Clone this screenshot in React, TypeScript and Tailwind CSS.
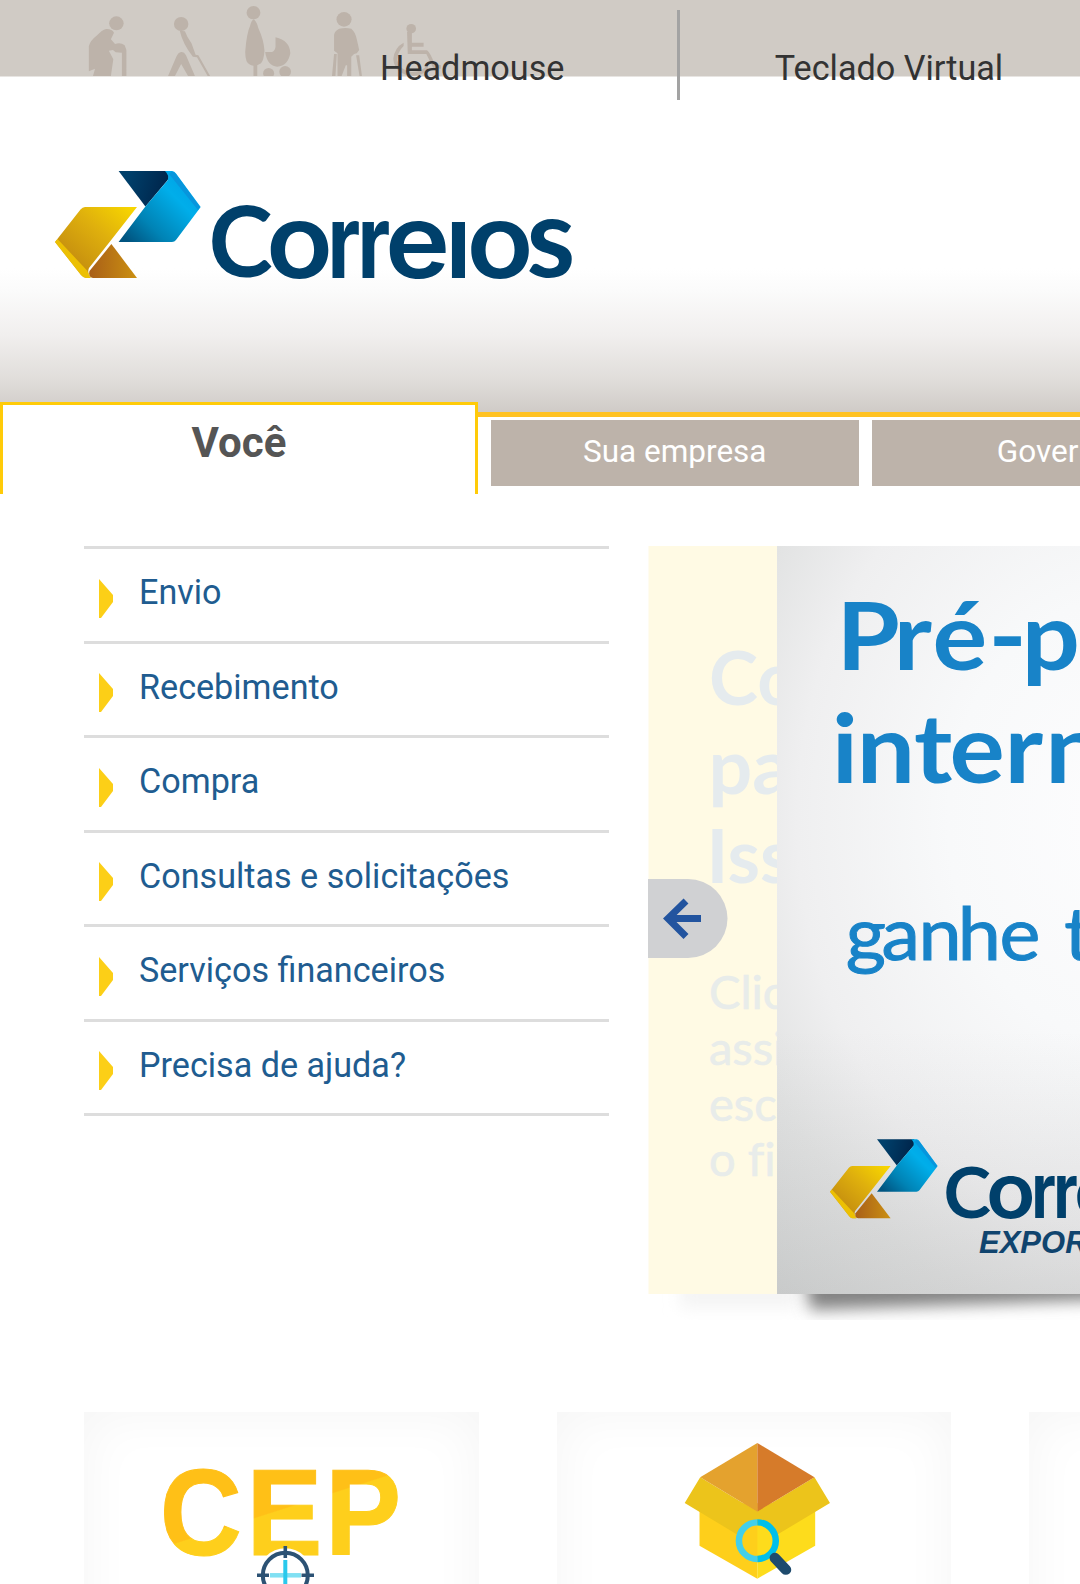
import React from "react";

const menu = [
  "Envio",
  "Recebimento",
  "Compra",
  "Consultas e solicitações",
  "Serviços financeiros",
  "Precisa de ajuda?",
];

function Defs() {
  return (
    <defs>
      <linearGradient id="navy" x1="0" y1="0" x2="1" y2="0.2">
        <stop offset="0.2" stopColor="#00406b" />
        <stop offset="1" stopColor="#00254b" />
      </linearGradient>
      <linearGradient id="sky" gradientUnits="userSpaceOnUse" x1="75" y1="72" x2="128" y2="18">
        <stop offset="0" stopColor="#005480" />
        <stop offset="0.35" stopColor="#0083b5" />
        <stop offset="0.85" stopColor="#00aeea" />
        <stop offset="1" stopColor="#00a8e8" />
      </linearGradient>
      <linearGradient id="gold" gradientUnits="userSpaceOnUse" x1="22" y1="90" x2="72" y2="34">
        <stop offset="0" stopColor="#c8920f" />
        <stop offset="0.5" stopColor="#dfb00d" />
        <stop offset="1" stopColor="#f7d500" />
      </linearGradient>
      <linearGradient id="brown" x1="0" y1="0" x2="1" y2="0">
        <stop offset="0" stopColor="#a95f18" />
        <stop offset="1" stopColor="#cb9011" />
      </linearGradient>
    </defs>
  );
}

/* Folded-arrow emblem followed by the wordmark */
function LogoArt() {
  return (
    <g>
      <path d="M63.6 0H114L113.6 8L90.4 35.6Z" fill="url(#navy)" />
      <path d="M110 0H117Q119.500 0 121 2.500L145.700 36L121 69Q119.500 71 117 71H63.600L90.400 35.600L112.500 9.500Q115 5 110 0Z" fill="url(#sky)" />
      <path d="M117 .5Q119.500 .5 121 3L145 36L143 39L114 3Z" fill="#0a8fd8" opacity=".75" />
      <path d="M30 36H82L55.400 70L34 97Q32 102 35.500 107H31Q28.500 107 26 104L0 71L25.500 38.500Q27.500 36 30 36Z" fill="url(#gold)" />
      <path d="M0 71L26 104Q28.500 107 31 107H36L32 99.500L2.500 68Z" fill="#f5cc00" opacity=".8" />
      <path d="M56.400 73L82 107H38Q33 106 34.500 100Z" fill="url(#brown)" />
      <g aria-label="Correios" fill="#00406b" fontFamily="Inter, sans-serif" fontWeight="600" fontSize="103">
        <text x="153.500" y="106" fontFamily="Lato, sans-serif" fontWeight="700" fontSize="97">C</text>
        <text transform="translate(211 106.5) scale(1.07 1)">o</text>
        <text transform="translate(272.5 106.500) scale(.78 1)" fontWeight="700">r</text>
        <text transform="translate(302.5 106.500) scale(.78 1)" fontWeight="700">r</text>
        <text transform="translate(330 106.5) scale(1.07 1)">e</text>
        <text transform="translate(390 106.5)">ı</text>
        <text transform="translate(411.5 106.5) scale(1.07 1)">o</text>
        <text x="471.500" y="106" fontFamily="Lato, sans-serif" fontWeight="700" fontSize="111">s</text>
      </g>
    </g>
  );
}

function Figures() {
  return (
    <svg
      className="absolute top-0 left-0 h-[76px] w-[540px]"
      viewBox="0 0 1568 228"
      preserveAspectRatio="none"
      fill="#bdb3aa"
      stroke="none"
    >
      <circle cx="338" cy="70" r="21" />
      <path d="M308 87Q325 86 331 98L322 118L334 132Q350 126 362 136L367 150V228H354V158L336 157L328 150L316 152L329 178L322 228H270L276 206L258 214V138Q262 122 282 106Q296 90 308 87Z" />
      <circle cx="526" cy="72" r="21" />
      <path d="M522 92L537 94Q543 112 556 130L568 164L576 166L610 228H603L572 172L560 170Q530 130 522 92Z" />
      <path d="M526 156Q534 154 540 166L566 228H546L526 192L508 228H488L512 170Q518 157 526 156Z" />
      <circle cx="736" cy="38" r="20" />
      <path d="M736 58Q746 64 750 84Q766 120 768 152Q766 180 758 190L747 196V228H736V197Q722 196 716 184Q712 172 712 156Q716 100 726 78Q730 62 736 58Z" />
      <path d="M800 112Q842 122 843 160Q836 198 805 200Q776 198 770 156H790Q799 152 800 140Z" />
      <circle cx="780" cy="220" r="16" />
      <circle cx="828" cy="215" r="17" />
      <circle cx="999" cy="58" r="22" />
      <path d="M985 86Q1004 82 1020 86Q1032 96 1036 118L1043 150L1036 160L1028 162L1020 170V228H1008V196H1004L992 228H980V160L970 152V104Q972 92 985 86Z" />
      <path d="M970 162L978 162L974 228H964ZM1034 166L1043 166L1051 228H1044Z" />
      <circle cx="1194" cy="86" r="14" />
      <path d="M1182 96H1196V128H1230V140H1196V151H1240Q1248 156 1262 192L1280 196V206L1258 204L1238 162H1184Z" />
      <path d="M1172 128V138Q1154 156 1153 180Q1160 212 1196 216Q1226 216 1240 196L1244 208Q1226 228 1200 228Q1146 224 1142 176Q1146 142 1172 128Z" />
    </svg>
  );
}

function Banner() {
  return (
    <svg className="block h-[780px] w-[432px] shrink-0" viewBox="648 546 432 780">
      <Defs />
      <defs>
        <radialGradient id="slide" gradientUnits="userSpaceOnUse" cx="0" cy="0" r="1" gradientTransform="translate(1130 820) scale(520 640)">
          <stop offset="0" stopColor="#fdfdfe" />
          <stop offset="0.35" stopColor="#f8f9fa" />
          <stop offset="0.64" stopColor="#efeff0" />
          <stop offset="0.8" stopColor="#e2e3e3" />
          <stop offset="1" stopColor="#d6d8d8" />
        </radialGradient>
        <linearGradient id="floor" x1="0" y1="0" x2="0" y2="1">
          <stop offset="0" stopColor="#777" stopOpacity="0" />
          <stop offset="1" stopColor="#777" stopOpacity="0.14" />
        </linearGradient>
        <filter id="soft" x="-20%" y="-80%" width="140%" height="260%">
          <feGaussianBlur stdDeviation="8" />
        </filter>
        <clipPath id="shade"><rect x="648" y="1294" width="432" height="26" /></clipPath>
      </defs>
      <g clipPath="url(#shade)">
        <rect x="680" y="1280" width="120" height="28" fill="#f4f4f4" filter="url(#soft)" />
        <path d="M804 1270H1120V1299L810 1310Z" fill="#828282" filter="url(#soft)" />
      </g>
      <rect x="648.5" y="546" width="130" height="748" fill="#fffae4" />
      <g className="[font-variant-ligatures:none]" fill="#e5ebee" fontFamily="Lato, sans-serif">
        <g fontWeight="700" fontSize="74">
          <text x="709" y="705">Co</text>
          <text x="708.500" y="794" fontSize="77">pa</text>
          <text x="706.500" y="883">Iss</text>
        </g>
        <g fontSize="47" fill="#e8ecea" stroke="#e8ecea" strokeWidth=".6">
          <text x="709" y="1009">Clic</text>
          <text x="709" y="1065">assi</text>
          <text x="709" y="1121">esc</text>
          <text x="709" y="1176">o fi</text>
        </g>
      </g>
      <rect x="777" y="546" width="310" height="748" fill="url(#slide)" />
      <rect x="777" y="1030" width="310" height="264" fill="url(#floor)" />
      <g fill="#1883c8" fontFamily="Lato, sans-serif">
        <g fontWeight="700" transform="scale(1.09 1)">
          <text fontSize="94" x="767.5 820 855.5 907 937.5" y="670">Pré-p</text>
          <text fontSize="95" x="763 786 838.500 871 921.500 959" y="783">intern</text>
        </g>
        <text transform="scale(1.06 1)" fontSize="73" stroke="#1883c8" strokeWidth="1" x="798 831.500 866.500 903.500 943 984 1004" y="960">ganhe t</text>
      </g>
      <g transform="translate(830 1139.3) scale(.739)">
        <LogoArt />
      </g>
      <text x="979" y="1253" fontFamily="'Liberation Sans', sans-serif" fontWeight="700" fontStyle="italic" fontSize="31" fill="#10446e">
        EXPOR
      </text>
      <path d="M648 879H688A39.500 39.500 0 0 1 688 958H648Z" fill="#d0d1d3" />
      <path d="M701 918.500H668M686 901L668 918.500L686 936.500" fill="none" stroke="#22549f" strokeWidth="7" />
    </svg>
  );
}

const card =
  "h-[260px] w-[394.5px] shrink-0 bg-white shadow-[inset_0_0_50px_4px_#f6f6f6]";

export default function App() {
  return (
    <div className="h-[1584px] w-[1080px] overflow-hidden bg-white font-['Roboto',sans-serif]">
      <header className="relative h-[412px] bg-[linear-gradient(to_bottom,#d0cbc5_0,#d0cbc5_76px,#fff_77px,#fff_268px,#fbfbfb_290px,#f1efee_335px,#e0ddda_380px,#d0cbc7_412px)]">
        <Figures />
        <div className="relative flex pt-[10px] text-[34.200px] leading-[40px] text-[#333]">
          <a className="ml-[267.500px] h-[90px] w-[412.500px] shrink-0 border-r-[3px] border-[#a3a3a3] pt-[37.500px] text-center">
            Headmouse
          </a>
          <a className="w-[418px] shrink-0 pt-[37.500px] text-center">Teclado Virtual</a>
        </div>
        <svg className="relative mt-[70.700px] ml-[55px] h-[112px] w-[530px]" viewBox="0 0 530 112">
          <Defs />
          <LogoArt />
        </svg>
      </header>

      <nav className="relative flex h-[134px] w-[1300px] items-start border-t-[5px] border-[#ffc222]">
        <a className="-mt-[15px] h-[92px] w-[478px] border-x-[3px] border-t-[3px] border-[#ffcb08] bg-white pt-[13px] text-center text-[42px] leading-[50px] font-bold text-[#555]">
          Você
        </a>
        <a className="mt-[3px] ml-[13px] h-[66px] w-[367.500px] bg-[#bdb3aa] pt-[14px] text-center text-[31.500px] leading-[36px] text-white">
          Sua empresa
        </a>
        <a className="mt-[3px] ml-[13px] h-[66px] w-[367.500px] bg-[#bdb3aa] pt-[14px] text-center text-[31.500px] leading-[36px] text-white">
          Governo
        </a>
      </nav>

      <main className="flex h-[866px] pl-[84px]">
        <ul className="h-[571px] w-[525px] shrink-0 border-t-[3px] border-[#ddd]">
          {menu.map((label) => (
            <li key={label} className="flex h-[94.500px] border-b-[3px] border-[#ddd] pt-[21px] pl-[14px] text-[34.150px] leading-[44px] text-[#205c90]">
              <svg className="mt-[8.500px] mr-[26px] h-[39px] w-[15px] shrink-0" viewBox="0 0 15 39">
                <path d="M1 0L15 16V23L3 39H1Z" fill="#fccf17" />
              </svg>
              {label}
            </li>
          ))}
        </ul>
        <div className="ml-[39px]">
          <Banner />
        </div>
      </main>

      <section className="flex gap-[78px] pl-[84px]">
        <div className={card}>
          <svg className="h-[172px] w-[394px]" viewBox="84 1412 394 172">
            <defs>
              <linearGradient id="cep" gradientUnits="userSpaceOnUse" x1="223" y1="1418" x2="287" y2="1618" gradientTransform="scale(1.081 1)">
                <stop offset="0.497" stopColor="#ffc017" />
                <stop offset="0.503" stopColor="#fecf1c" />
              </linearGradient>
            </defs>
            <text transform="scale(.925 1)" x="172.800 266.500 351.700" y="1555.5" fontFamily="'Liberation Sans', sans-serif" fontWeight="700" fontSize="123" fill="url(#cep)" stroke="url(#cep)" strokeWidth="1">
              CEP
            </text>
            <circle cx="285.300" cy="1575.300" r="27" fill="#fff" />
            <circle cx="285.300" cy="1575.300" r="22.500" fill="#fff" stroke="#2c5274" strokeWidth="4" />
            <path d="M285.300 1546V1558M257 1575.300H269M301.500 1575.300H314" stroke="#2c5274" strokeWidth="3.600" />
            <path d="M270 1575.300H301" stroke="#80e0f3" strokeWidth="4.500" />
            <path d="M285.300 1560V1590" stroke="#2ac9ec" strokeWidth="4" />
          </svg>
        </div>
        <div className={card}>
          <svg className="h-[172px] w-[394.500px]" viewBox="47 66 1146 516" preserveAspectRatio="none">
            <path d="M461 340V467L629 566V340Z" fill="#fecf1b" />
            <path d="M797 340V467L629 566V340Z" fill="#fddc1c" />
            <path d="M629 365L795 262L840 339L629 470L418 339L463 262Z" fill="#ecc41b" />
            <ellipse cx="629" cy="452" rx="50" ry="52" fill="#fecf1b" />
            <path d="M629 400A50 52 0 0 1 629 504Z" fill="#fddc1c" />
            <path d="M629 159L463 262L629 365Z" fill="#e4a22e" />
            <path d="M629 159L795 262L629 365Z" fill="#d67b2a" />
            <path d="M629 397A53.500 55 0 0 0 629 507" fill="none" stroke="#43cfea" strokeWidth="19" />
            <path d="M629 397A53.500 55 0 0 1 629 507" fill="none" stroke="#00bfe9" strokeWidth="19" />
            <path d="M680 504L712 539" stroke="#1e4b6d" strokeWidth="31" strokeLinecap="round" />
          </svg>
        </div>
        <div className={card} />
      </section>
    </div>
  );
}
